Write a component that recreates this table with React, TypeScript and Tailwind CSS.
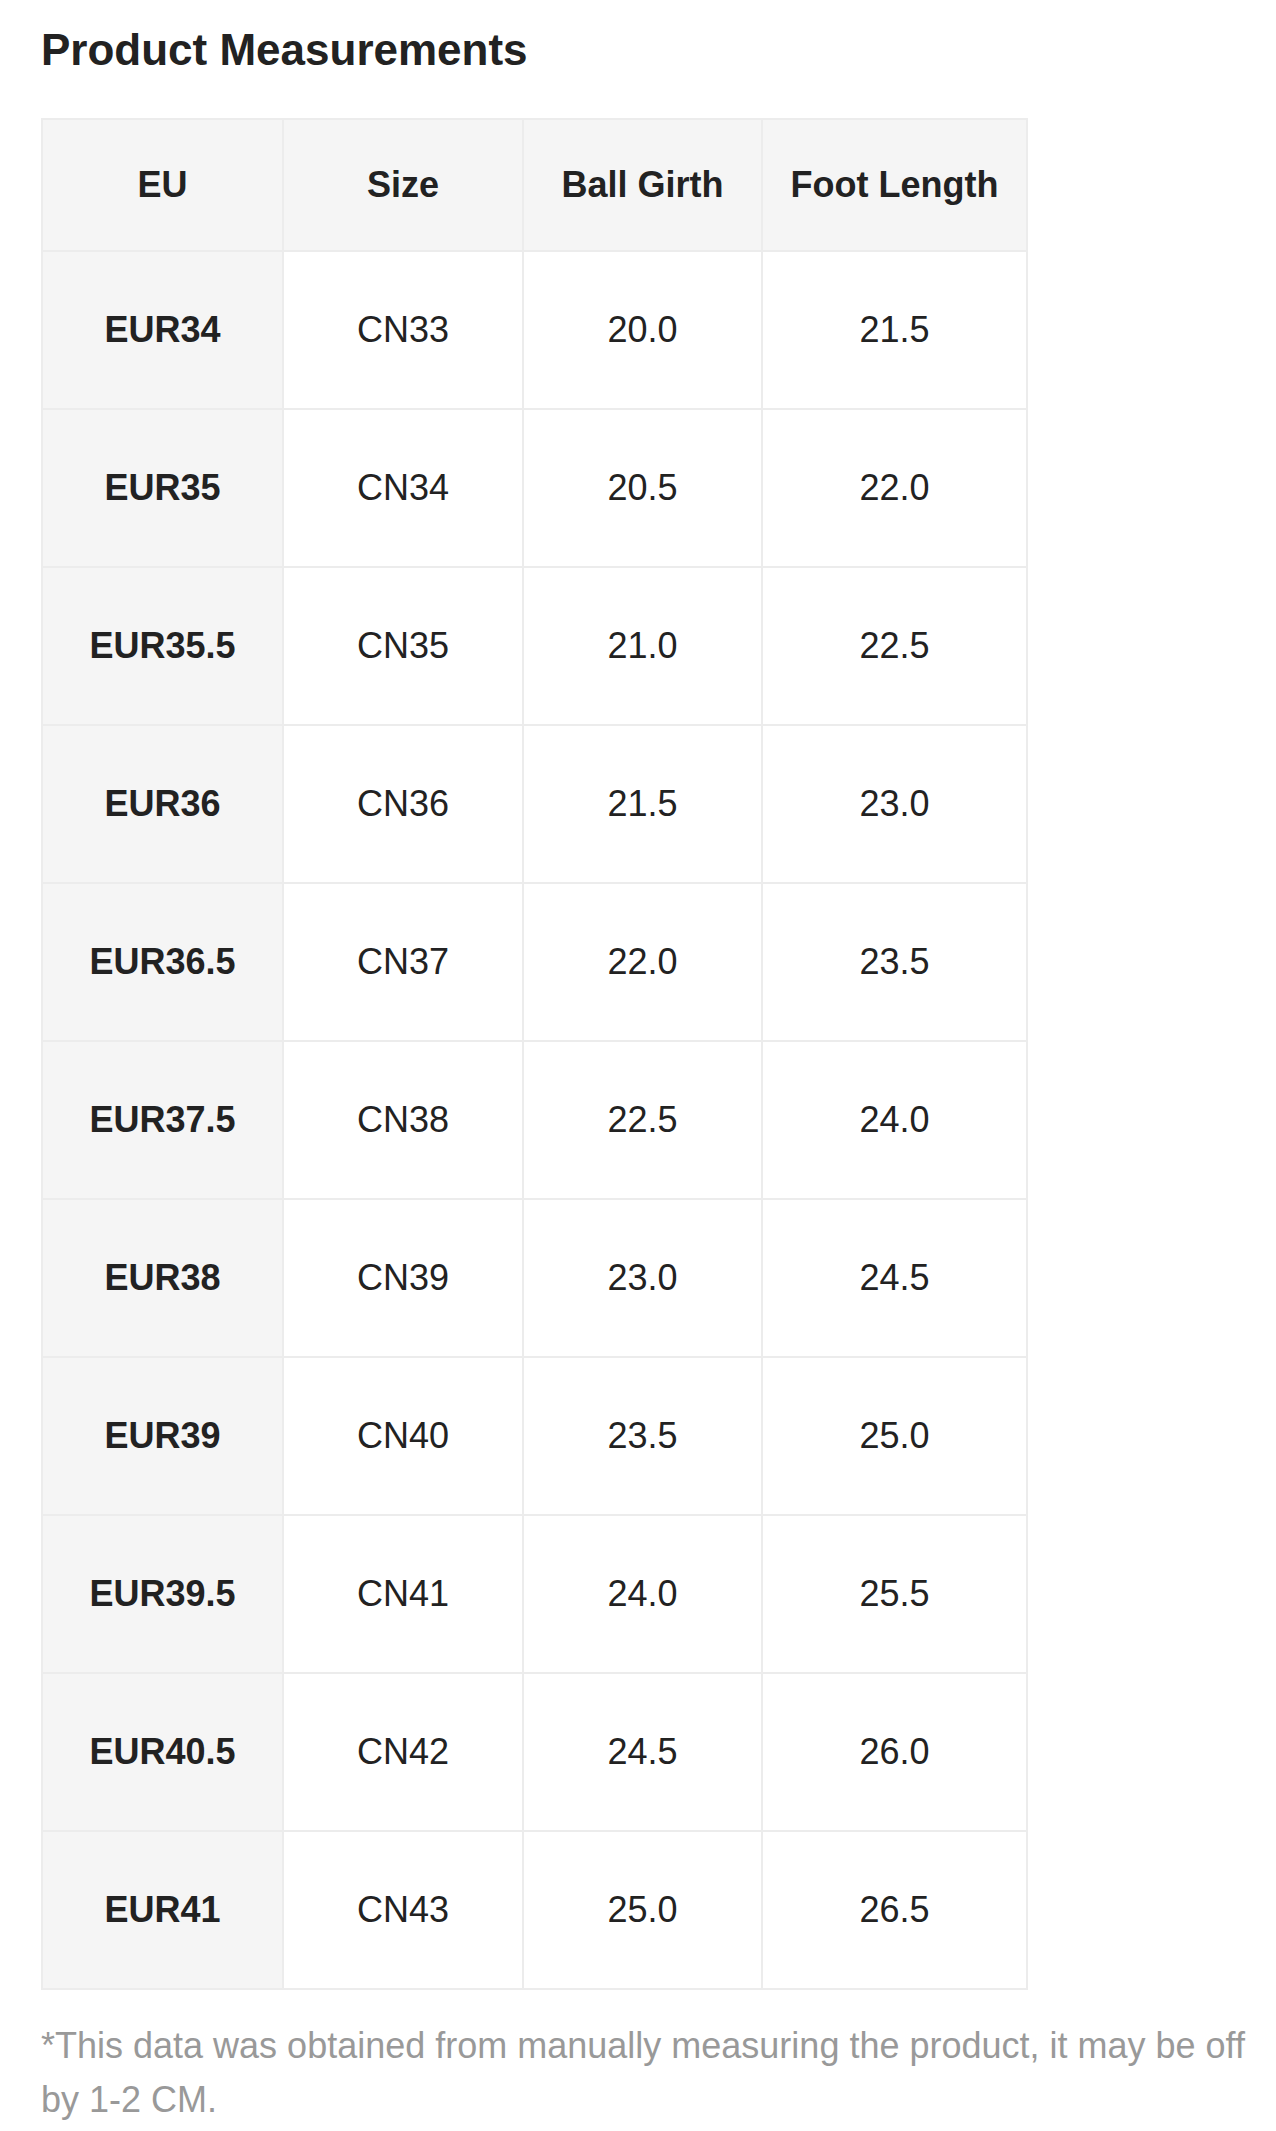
import React from "react";

const rows = [
  ["EUR34", "CN33", "20.0", "21.5"],
  ["EUR35", "CN34", "20.5", "22.0"],
  ["EUR35.5", "CN35", "21.0", "22.5"],
  ["EUR36", "CN36", "21.5", "23.0"],
  ["EUR36.5", "CN37", "22.0", "23.5"],
  ["EUR37.5", "CN38", "22.5", "24.0"],
  ["EUR38", "CN39", "23.0", "24.5"],
  ["EUR39", "CN40", "23.5", "25.0"],
  ["EUR39.5", "CN41", "24.0", "25.5"],
  ["EUR40.5", "CN42", "24.5", "26.0"],
  ["EUR41", "CN43", "25.0", "26.5"],
];

export default function App() {
  return (
    <div
      className="min-h-[2131px] bg-white pl-[41px] pr-[24px] pt-[24px] text-[#222222]"
      style={{ fontFamily: '"Liberation Sans", Arial, Helvetica, sans-serif' }}
    >
      <h1 className="text-[44px] font-bold leading-[52px]">Product Measurements</h1>
      <table className="mt-[42px] table-fixed border-collapse text-[36px]">
        <colgroup>
          <col className="w-[241px]" />
          <col className="w-[240px]" />
          <col className="w-[239px]" />
          <col className="w-[265px]" />
        </colgroup>
        <thead>
          <tr className="h-[132px] bg-[#f5f5f5]">
            {["EU", "Size", "Ball Girth", "Foot Length"].map((h) => (
              <th
                key={h}
                className="border-2 border-[#ececec] p-0 text-center align-middle font-bold leading-none"
              >
                {h}
              </th>
            ))}
          </tr>
        </thead>
        <tbody>
          {rows.map((r) => (
            <tr key={r[0]} className="h-[158px]">
              <td className="border-2 border-[#ececec] bg-[#f5f5f5] p-0 text-center align-middle font-bold leading-none">
                {r[0]}
              </td>
              <td className="border-2 border-[#ececec] p-0 text-center align-middle leading-none">
                {r[1]}
              </td>
              <td className="border-2 border-[#ececec] p-0 text-center align-middle leading-none">
                {r[2]}
              </td>
              <td className="border-2 border-[#ececec] p-0 text-center align-middle leading-none">
                {r[3]}
              </td>
            </tr>
          ))}
        </tbody>
      </table>
      <p className="mt-[29px] text-[36px] leading-[54px] text-[#999999]">
        *This data was obtained from manually measuring the product, it may be off by 1-2 CM.
      </p>
    </div>
  );
}
